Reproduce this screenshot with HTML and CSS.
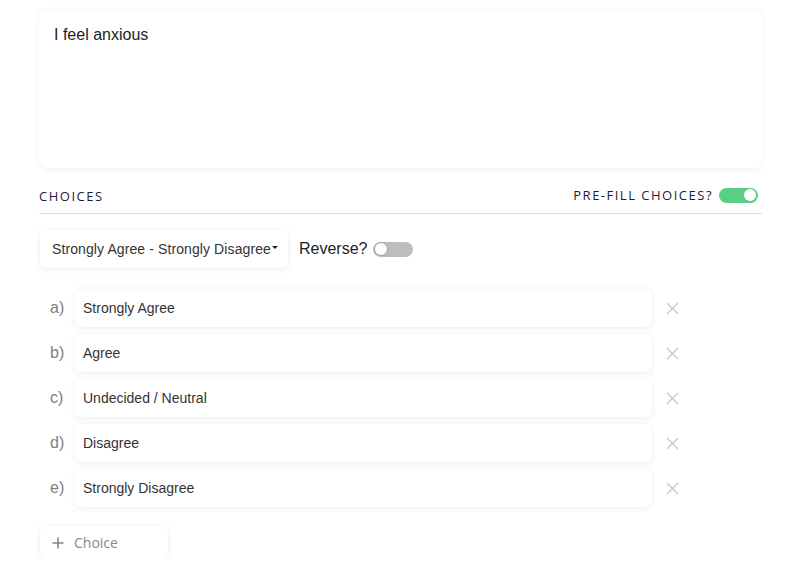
FILE: index.html
```html
<!DOCTYPE html>
<html>
<head>
<meta charset="utf-8">
<link rel="stylesheet" href="styles.css">
</head>
<body>
<div class="page">
  <div class="question-card">I feel anxious</div>

  <div class="choices-header">
    <span class="section-title">CHOICES</span>
    <div class="prefill">
      <span class="section-title">PRE-FILL CHOICES?</span>
      <span class="toggle on"><span class="knob"></span></span>
    </div>
  </div>

  <div class="scale-row">
    <div class="dropdown">Strongly Agree - Strongly Disagree<span class="caret"></span></div>
    <span class="reverse-label">Reverse?</span>
    <span class="toggle off"><span class="knob"></span></span>
  </div>

  <div class="choice-list">
    <div class="choice"><span class="letter">a)</span><div class="choice-input">Strongly Agree</div><svg class="remove" width="13" height="13" viewBox="0 0 13 13"><path d="M1 1L12 12M12 1L1 12"/></svg></div>
    <div class="choice"><span class="letter">b)</span><div class="choice-input">Agree</div><svg class="remove" width="13" height="13" viewBox="0 0 13 13"><path d="M1 1L12 12M12 1L1 12"/></svg></div>
    <div class="choice"><span class="letter">c)</span><div class="choice-input">Undecided / Neutral</div><svg class="remove" width="13" height="13" viewBox="0 0 13 13"><path d="M1 1L12 12M12 1L1 12"/></svg></div>
    <div class="choice"><span class="letter">d)</span><div class="choice-input">Disagree</div><svg class="remove" width="13" height="13" viewBox="0 0 13 13"><path d="M1 1L12 12M12 1L1 12"/></svg></div>
    <div class="choice"><span class="letter">e)</span><div class="choice-input">Strongly Disagree</div><svg class="remove" width="13" height="13" viewBox="0 0 13 13"><path d="M1 1L12 12M12 1L1 12"/></svg></div>
  </div>

  <div class="add-choice">
    <svg width="12" height="12" viewBox="0 0 12 12"><path d="M6 0.5V11.5M0.5 6H11.5" stroke="#888" stroke-width="1.6" fill="none"/></svg>
    <span>Choice</span>
  </div>
</div>
</body>
</html>
```

FILE: styles.css
```css
* { box-sizing: border-box; }
html, body { margin: 0; padding: 0; background: #fff; }
body { font-family: "Liberation Sans", Arial, sans-serif; color: #222; }

.page {
  width: 723px;
  margin-left: 39px;
  padding-top: 10px;
}

.question-card {
  height: 158px;
  background: #fff;
  border-radius: 8px;
  box-shadow: 0 1px 6px rgba(0,0,0,0.07);
  padding: 16px 15px;
  font-size: 16px;
  line-height: 18px;
  color: #222;
}

.choices-header {
  margin-top: 18px;
  height: 28px;
  border-bottom: 1px solid #dcdcdc;
  display: flex;
  justify-content: space-between;
  align-items: flex-start;
}
.section-title {
  font-family: "Open Sans", sans-serif;
  font-size: 13px;
  letter-spacing: 1.5px;
  color: #1c1c3c;
  line-height: 18px;
}
.choices-header > .section-title { padding-top: 1px; }
.prefill {
  display: flex;
  align-items: center;
  gap: 6px;
  margin-right: 4px;
}

.toggle {
  display: inline-flex;
  align-items: center;
  width: 39px;
  height: 15px;
  border-radius: 8px;
  padding: 0 2px;
}
.toggle .knob {
  width: 12px;
  height: 12px;
  border-radius: 50%;
  background: #fff;
}
.toggle.on { background: #5bcf83; justify-content: flex-end; }
.toggle.off { background: #bdbdbd; justify-content: flex-start; padding: 0 1px; width: 40px; }
.toggle.off .knob { width: 14px; height: 14px; border: 1px solid #9e9e9e; }

.scale-row {
  margin-top: 16px;
  display: flex;
  align-items: center;
  height: 38px;
}
.dropdown {
  margin-left: 1px;
  height: 38px;
  width: 248px;
  background: #fff;
  border-radius: 6px;
  box-shadow: 0 1px 6px rgba(0,0,0,0.08);
  display: flex;
  align-items: center;
  padding-left: 12px;
  font-size: 14px;
  letter-spacing: 0.1px;
  color: #333;
  white-space: nowrap;
}
.caret {
  display: inline-block;
  width: 0; height: 0;
  border-left: 3px solid transparent;
  border-right: 3px solid transparent;
  border-top: 3px solid #222;
  margin-left: 1px;
  margin-bottom: 3px;
}
.reverse-label {
  margin-left: 11px;
  margin-right: 6px;
  font-size: 16px;
  color: #222;
}

.choice-list {
  margin-top: 21px;
  display: flex;
  flex-direction: column;
  gap: 7px;
}
.choice {
  display: flex;
  align-items: center;
  height: 38px;
}
.letter {
  width: 36px;
  padding-left: 11px;
  font-size: 16px;
  color: #808080;
}
.choice-input {
  width: 577px;
  height: 38px;
  background: #fff;
  border-radius: 6px;
  box-shadow: 0 1px 6px rgba(0,0,0,0.08);
  display: flex;
  align-items: center;
  padding-left: 8px;
  font-size: 14px;
  color: #333;
}
.remove {
  margin-left: 14px;
  stroke: #c8c8c8;
  stroke-width: 1.4;
  fill: none;
}

.add-choice {
  margin-top: 19px;
  margin-left: 1px;
  width: 128px;
  height: 33px;
  background: #fff;
  border-radius: 6px;
  box-shadow: 0 1px 6px rgba(0,0,0,0.08);
  display: flex;
  align-items: center;
  gap: 10px;
  padding-left: 12px;
  font-family: "Open Sans", sans-serif;
  font-size: 14px;
  color: #888;
}
```
